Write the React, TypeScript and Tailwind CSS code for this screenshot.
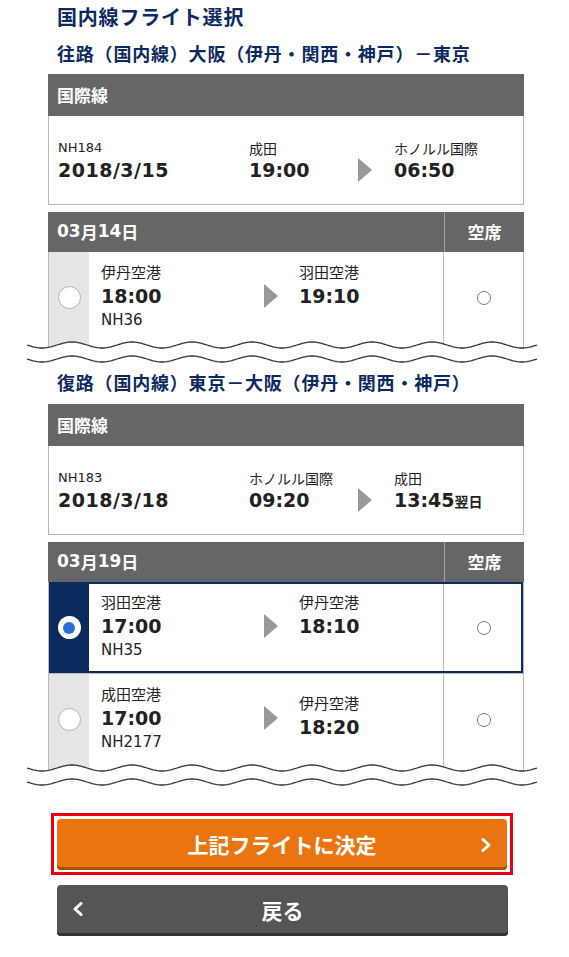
import React from "react";

const JP = { fontFamily: '"Noto Sans CJK JP", sans-serif' };
const NUM = { fontFamily: '"DejaVu Sans", "Noto Sans CJK JP", sans-serif' };

function Triangle() {
  return (
    <svg width="14" height="24" viewBox="0 0 14 24" className="block">
      <polygon points="0,0 14,12 0,24" fill="#999999" />
    </svg>
  );
}

function Wave() {
  const line = (y0: number) => {
    const pts: string[] = [];
    for (let x = 0; x <= 510; x += 2) {
      pts.push(`${x},${(y0 + 3 * Math.sin((2 * Math.PI * x) / 60)).toFixed(2)}`);
    }
    return pts;
  };
  const top = line(6);
  const bottom = line(20);
  const fill = `M${top.join(" L")} L510,26 L0,26 Z`;
  return (
    <div className="relative z-10 -mt-[9px] -ml-[21px] h-[26px] w-[510px]">
      <svg width="510" height="26" viewBox="0 0 510 26" className="block">
        <path d={fill} fill="#ffffff" />
        <polyline points={top.join(" ")} fill="none" stroke="#333" strokeWidth="1.3" />
        <polyline points={bottom.join(" ")} fill="none" stroke="#333" strokeWidth="1.3" />
      </svg>
    </div>
  );
}

function InfoCard({ no, date, from, dep, to, arr, next }: { no: string; date: string; from: string; dep: string; to: string; arr: string; next?: boolean }) {
  return (
    <div>
      <div className="flex h-[42px] items-center bg-[#666666] pl-[9px] text-[17px] font-bold text-white" style={JP}>
        国際線
      </div>
      <div className="grid h-[89px] grid-cols-[191px_109px_36px_1fr] content-center border-x border-b border-[#b5b5b5] pl-[9px] text-[#222]">
        <div>
          <div className="h-[20px] text-[13px] leading-[20px]" style={NUM}>{no}</div>
          <div className="h-[24px] text-[19px] font-bold leading-[24px] tracking-[0.5px]" style={NUM}>{date}</div>
        </div>
        <div>
          <div className="h-[20px] text-[14px] leading-[20px]" style={JP}>{from}</div>
          <div className="h-[24px] text-[19px] font-bold leading-[24px]" style={NUM}>{dep}</div>
        </div>
        <div className="pt-[20px]">
          <Triangle />
        </div>
        <div>
          <div className="h-[20px] text-[14px] leading-[20px]" style={JP}>{to}</div>
          <div className="h-[24px] text-[19px] font-bold leading-[24px]" style={NUM}>
            {arr}
            {next && <span className="text-[14px] font-bold" style={JP}>翌日</span>}
          </div>
        </div>
      </div>
    </div>
  );
}

type Flight = { from: string; dep: string; no: string; to: string; arr: string; selected?: boolean; shift?: boolean; h: string };

function FlightRow({ f, first }: { f: Flight; first: boolean }) {
  return (
    <div
      className={
        "flex " +
        f.h +
        (first ? "" : " border-t border-[#bbbbbb]") +
        (f.selected ? " outline-2 -outline-offset-2 outline-[#0b2b5e]" : "")
      }
    >
      <div className={"flex w-[40px] items-start justify-center pt-[34px] " + (f.selected ? "bg-[#0b2b5e]" : "bg-[#e6e6e6]")}>
        {f.selected ? (
          <div className="flex h-[23px] w-[23px] items-center justify-center rounded-full bg-white">
            <div className="h-[12px] w-[12px] rounded-full bg-[#2a6fd6]" />
          </div>
        ) : (
          <div className="h-[23px] w-[23px] rounded-full border border-[#b0b0b0] bg-white" />
        )}
      </div>
      <div className="grid flex-1 grid-cols-[163px_35px_1fr] pl-[12px] pt-[9px] text-[#222]">
        <div>
          <div className="h-[22px] text-[15px] leading-[22px]" style={JP}>{f.from}</div>
          <div className="h-[26px] text-[19px] font-bold leading-[26px]" style={NUM}>{f.dep}</div>
          <div className="h-[22px] text-[15px] leading-[22px]" style={NUM}>{f.no}</div>
        </div>
        <div className="pt-[23px]">
          <Triangle />
        </div>
        <div className={f.shift ? "pt-[9px]" : ""}>
          <div className="h-[22px] text-[15px] leading-[22px]" style={JP}>{f.to}</div>
          <div className="h-[26px] text-[19px] font-bold leading-[26px]" style={NUM}>{f.arr}</div>
        </div>
      </div>
      <div className="flex w-[80px] items-start justify-center border-l border-[#bbbbbb] pt-[39px]">
        <div className="h-[14px] w-[14px] rounded-full border-[1.5px] border-[#777]" />
      </div>
    </div>
  );
}

function DateSection({ date, flights }: { date: string; flights: Flight[] }) {
  return (
    <div>
      <div className="flex h-[40px] bg-[#666666] text-[17px] font-bold text-white">
        <div className="flex flex-1 items-center pl-[9px]" style={NUM}>
          <span>03</span>
          <span style={JP}>月</span>
          <span>{date}</span>
          <span style={JP}>日</span>
        </div>
        <div className="flex w-[80px] items-center justify-center border-l border-[#a0a0a0]" style={JP}>
          空席
        </div>
      </div>
      <div className="border-x border-[#bbbbbb]">
        {flights.map((f, i) => (
          <FlightRow key={f.no} f={f} first={i === 0} />
        ))}
      </div>
    </div>
  );
}

export default function App() {
  return (
    <div className="min-h-[957px] w-[569px] bg-white">
      <div className="ml-[48px] w-[476px] pt-[4px]">
        <h1 className="h-[26px] pl-[9px] text-[20px] font-bold leading-[26px] tracking-[0.8px] text-[#0c2a61]" style={JP}>
          国内線フライト選択
        </h1>
        <h2 className="mt-[11px] h-[24px] pl-[9px] text-[18px] font-bold leading-[24px] tracking-[0.8px] text-[#0c2a61]" style={JP}>
          往路（国内線）大阪（伊丹・関西・神戸）－東京
        </h2>
        <div className="mt-[9px]">
          <InfoCard no="NH184" date="2018/3/15" from="成田" dep="19:00" to="ホノルル国際" arr="06:50" />
        </div>
        <div className="mt-[7px]">
          <DateSection
            date="14"
            flights={[{ from: "伊丹空港", dep: "18:00", no: "NH36", to: "羽田空港", arr: "19:10", h: "h-[96px]" }]}
          />
        </div>
        <Wave />
        <h2 className="mt-[5px] h-[24px] pl-[9px] text-[18px] font-bold leading-[24px] tracking-[0.8px] text-[#0c2a61]" style={JP}>
          復路（国内線）東京－大阪（伊丹・関西・神戸）
        </h2>
        <div className="mt-[10px]">
          <InfoCard no="NH183" date="2018/3/18" from="ホノルル国際" dep="09:20" to="成田" arr="13:45" next />
        </div>
        <div className="mt-[7px]">
          <DateSection
            date="19"
            flights={[
              { from: "羽田空港", dep: "17:00", no: "NH35", to: "伊丹空港", arr: "18:10", selected: true, h: "h-[91px]" },
              { from: "成田空港", dep: "17:00", no: "NH2177", to: "伊丹空港", arr: "18:20", shift: true, h: "h-[98px]" },
            ]}
          />
        </div>
        <Wave />
        <div className="mt-[25px] ml-[3px] w-[462px] border-[3px] border-[#e60012] px-[3px] pb-[2px] pt-[3px]">
          <button
            className="relative flex h-[51px] w-full items-center justify-center rounded-[4px] bg-[#ea7510] text-[21px] font-bold text-white shadow-[inset_0_-3px_0_#a45300]"
            style={JP}
          >
            上記フライトに決定
            <svg className="absolute right-[16px] top-[19px]" width="10" height="14" viewBox="0 0 10 14">
              <polyline points="2,1.5 8,7 2,12.5" fill="none" stroke="#fff" strokeWidth="3" strokeLinecap="round" strokeLinejoin="round" />
            </svg>
          </button>
        </div>
        <button
          className="relative mt-[10px] ml-[9px] flex h-[51px] w-[451px] items-center justify-center rounded-[4px] bg-[#555555] text-[21px] font-bold text-white shadow-[inset_0_-3px_0_#333333]"
          style={JP}
        >
          <svg className="absolute left-[16px] top-[17px]" width="10" height="14" viewBox="0 0 10 14">
            <polyline points="8,1.5 2,7 8,12.5" fill="none" stroke="#fff" strokeWidth="3" strokeLinecap="round" strokeLinejoin="round" />
          </svg>
          戻る
        </button>
      </div>
    </div>
  );
}
